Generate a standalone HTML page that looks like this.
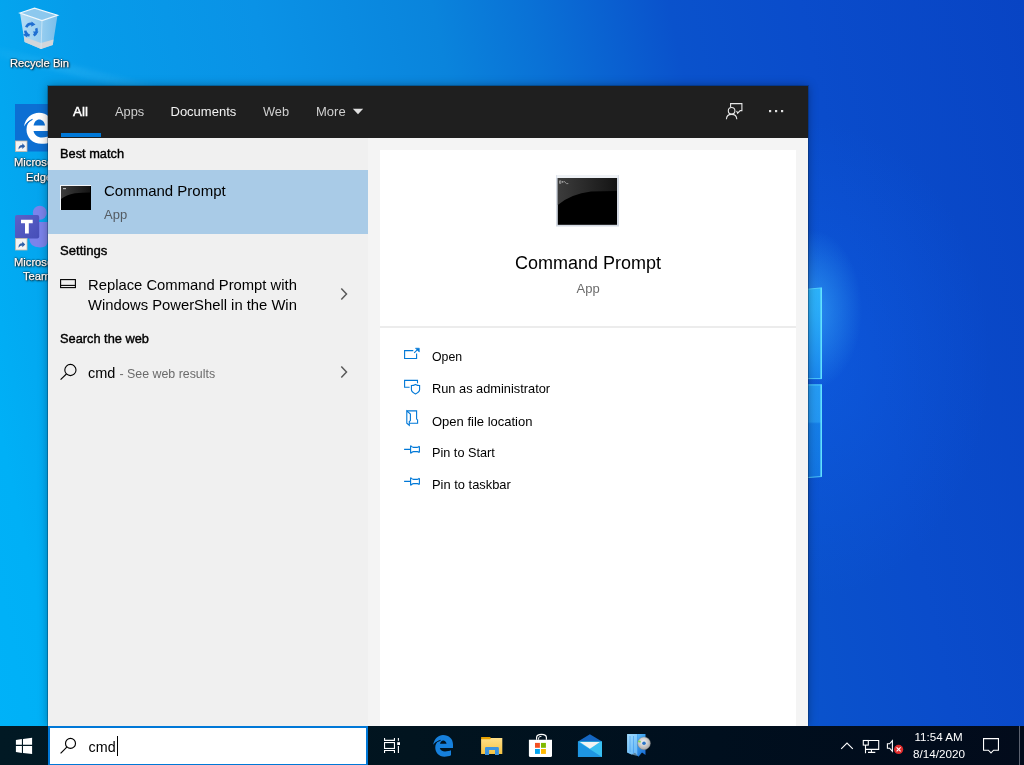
<!DOCTYPE html>
<html><head><meta charset="utf-8">
<style>
*{margin:0;padding:0;box-sizing:border-box}
html,body{width:1024px;height:765px;overflow:hidden}
body{position:relative;font-family:"Liberation Sans",sans-serif;
background:linear-gradient(78deg,#00b2f8 0%,#00b0f6 6%,#04a4ee 14%,#069cea 20%,#0a92e6 35%,#0a84dc 50%,#0a72d6 58%,#0a52cc 70%,#0a4ccb 81%,#0844c4 100%);}
.a{position:absolute;white-space:nowrap;line-height:1}
#glow{position:absolute;left:600px;top:60px;width:424px;height:666px;background:radial-gradient(ellipse 50px 80px at 212px 250px,rgba(60,180,255,.6),rgba(60,180,255,0) 100%),radial-gradient(ellipse 180px 240px at 212px 300px,rgba(20,110,255,.3),rgba(20,110,255,0) 100%)}
#panel{will-change:transform;position:absolute;left:48px;top:86px;width:760px;height:640px;box-shadow:0 0 0 1px rgba(0,30,60,.3),0 0 9px rgba(0,0,0,.35)}
#hdr{position:absolute;left:0;top:0;width:760px;height:52px;background:#1f1f1f}
#lp{position:absolute;left:0;top:52px;width:320px;height:588px;background:#f0f0f0}
#rp{position:absolute;left:320px;top:52px;width:440px;height:588px;background:#f4f4f4}
#card{position:absolute;left:12px;top:12px;width:416px;height:576px;background:#fff}
#taskbar{will-change:transform;position:absolute;left:0;top:726px;width:1024px;height:39px;background:linear-gradient(90deg,#011924 0%,#01141f 40%,#000f1e 70%,#020b1b 100%)}
.dt{will-change:transform;color:#fff;font-size:11.2px;-webkit-text-stroke:0.25px #fff;text-shadow:0 0 1px #000,0 0 2px #000,1px 1px 2px #000}
</style></head><body>
<div id="glow"></div>
<div style="position:absolute;left:-30px;top:41px;width:260px;height:9px;transform:rotate(13.5deg);transform-origin:0 50%;background:linear-gradient(90deg,rgba(140,225,255,0),rgba(140,225,255,.13) 35%,rgba(140,225,255,0) 90%);filter:blur(2px)"></div>

<!-- desktop icons -->
<svg id="desk" width="1024" height="726" style="position:absolute;left:0;top:0">
 <defs>
  <linearGradient id="binb" x1="0" y1="0" x2="1" y2="0"><stop offset="0" stop-color="#bfe0f5"/><stop offset="0.55" stop-color="#9fd0f0"/><stop offset="1" stop-color="#80c0ea"/></linearGradient>
  <linearGradient id="teamb" x1="0" y1="0" x2="1" y2="1"><stop offset="0" stop-color="#5b62c8"/><stop offset="1" stop-color="#464eb8"/></linearGradient>
 </defs>
 <!-- light beams -->
 <defs>
  <linearGradient id="pn1" x1="0" y1="0" x2="0" y2="1"><stop offset="0" stop-color="#30c0ff" stop-opacity=".8"/><stop offset="1" stop-color="#20a0f8" stop-opacity=".6"/></linearGradient>
  <linearGradient id="pn2" x1="0" y1="0" x2="0" y2="1"><stop offset="0" stop-color="#30b8ff" stop-opacity=".7"/><stop offset=".4" stop-color="#30b8ff" stop-opacity=".65"/><stop offset=".42" stop-color="#1c98f2" stop-opacity=".6"/><stop offset="1" stop-color="#1890f0" stop-opacity=".55"/></linearGradient>
 </defs>
 <path d="M800,289.8L822,287.8V379H800Z" fill="url(#pn1)"/>
 <path d="M800,384.5H822V476.5L800,478Z" fill="url(#pn2)"/>
 <path d="M821.2,288V379M821.2,384.5V476.5" stroke="#66e6ff" stroke-width="1.5"/>
 <path d="M808,289.2L822,287.8M808,378.6H822M808,384.9H822M808,477.5L822,476.5" stroke="#58d8ff" stroke-width="1" opacity=".85"/>
 <!-- recycle bin -->
 <g>
  <path d="M20,13L24.6,42L41,49L52.8,45L57.5,15.3L42,20.5Z" fill="url(#binb)" opacity="0.95"/>
  <path d="M24,37L41,43L53.5,39.5L52.8,45L41,49L24.6,42Z" fill="#d2d6da"/>
  <path d="M20,13L34.5,8.2L57.5,15.3L42,20.5Z" fill="#8cc8ee" stroke="#f2f8fc" stroke-width="1.2"/>
  <path d="M42,20.5L41,49" stroke="#cfe8f8" stroke-width="0.8"/>
  <g fill="none" stroke="#1f6fd2" stroke-width="2.6">
   <path d="M26.2,27.2A5.6,5.6 0 0 1 32.5,23.9"/>
   <path d="M36.2,28.3A5.6,5.6 0 0 1 33.6,35.3"/>
   <path d="M29.6,35.6A5.6,5.6 0 0 1 25.3,30.6"/>
  </g>
  <g fill="#1f6fd2">
   <path d="M31.5,21.5L35.5,24.6L31.2,26.8Z"/>
   <path d="M38.5,31.5L35.6,35.8L32.9,31.6Z"/>
   <path d="M27.2,37.5L23,34.8L27.6,32.2Z"/>
  </g>
 </g>
 <!-- edge desktop icon -->
 <rect x="15" y="104" width="34" height="47.5" fill="#0c6fd3"/>
 <path d="M24,126.5C25.5,117.5 32,112.7 39,112.7C47,112.7 53,118.5 53,127V131H33.5C34.5,135 37.5,137.5 42,137.5C45.5,137.5 49,136.5 51.5,135V142C48.5,143.3 45,143.8 41.5,143.8C32.5,143.8 26.5,137.5 26.5,129.5C26.5,125 28.5,121.5 31.5,119.5C28.5,120.8 25.8,123.2 24,126.5Z" fill="#fff"/>
 <path d="M33.6,125.5H45C44.6,121.8 42,119.5 39.2,119.5C36.5,119.5 34.2,121.8 33.6,125.5Z" fill="#0c6fd3"/>
 <path d="M26.3,124.5Q29,120.8 32.5,119.2" stroke="#0c6fd3" stroke-width="1.1" fill="none"/>
 <rect x="15.5" y="141" width="11.5" height="10.5" fill="#f3f3f3" stroke="#c8b9a8" stroke-width="0.8"/>
 <path d="M18.5,149.5Q18.3,145.2 22.3,145L22.3,143.3L25.2,146.2L22.3,149V147.3Q20,147.3 18.5,149.5Z" fill="#2d5fa8"/>
 <!-- teams desktop icon -->
 <circle cx="39.8" cy="212.7" r="7" fill="#7b83eb"/>
 <path d="M29.2,222H48V240Q48,247.4 40,247.4Q29.2,247.4 29.2,238Z" fill="#7b83eb"/>
 <rect x="15" y="215" width="24.2" height="23.6" rx="2" fill="url(#teamb)"/>
 <path d="M21,219.8H32.7V223.3H28.8V233.5H25V223.3H21Z" fill="#fff"/>
 <rect x="15.5" y="238.5" width="11.5" height="11.5" fill="#f3f3f3" stroke="#c8b9a8" stroke-width="0.8"/>
 <path d="M18.5,247.8Q18.3,243.5 22.3,243.3L22.3,241.6L25.2,244.5L22.3,247.3V245.6Q20,245.6 18.5,247.8Z" fill="#2d5fa8"/>
</svg>
<div class="a dt" style="left:14px;top:157.3px">Microsoft</div>
<div class="a dt" style="left:26px;top:171.5px">Edge</div>
<div class="a dt" style="left:14px;top:256.8px">Microsoft</div>
<div class="a dt" style="left:23.3px;top:271px">Teams</div>

<div class="a dt" style="left:10px;top:58px">Recycle Bin</div>

<div id="panel">
  <div id="hdr">
    <div class="a" style="left:25px;top:18.6px;font-size:13.4px;-webkit-text-stroke:0.45px #fff;color:#fff">All</div>
    <div style="position:absolute;left:13px;top:47px;width:40px;height:4px;background:#0078d7"></div>
    <div class="a" style="left:67px;top:19.6px;font-size:12.8px;color:#cfcfcf">Apps</div>
    <div class="a" style="left:122.5px;top:19px;font-size:13px;color:#f2f2f2">Documents</div>
    <div class="a" style="left:215px;top:19.6px;font-size:12.8px;color:#cfcfcf">Web</div>
    <div class="a" style="left:268px;top:19px;font-size:13px;color:#cfcfcf">More</div>
  </div>
  <div id="lp">
    <div class="a" style="left:12px;top:10.3px;font-size:12.8px;-webkit-text-stroke:0.4px #000;color:#000">Best match</div>
    <div style="position:absolute;left:0;top:32px;width:320px;height:64px;background:#a9cbe7"></div>
    <div class="a" style="left:56px;top:45.3px;font-size:15px;color:#000">Command Prompt</div>
    <div class="a" style="left:56px;top:69.5px;font-size:13px;color:#545b62">App</div>
    <div class="a" style="left:12px;top:106px;font-size:13.1px;-webkit-text-stroke:0.4px #000;color:#000">Settings</div>
    <div class="a" style="left:40px;top:139.6px;font-size:14.8px;color:#000">Replace Command Prompt with</div>
    <div class="a" style="left:40px;top:160px;font-size:14.8px;color:#000">Windows PowerShell in the Win</div>
    <div class="a" style="left:12px;top:194.7px;font-size:12.8px;-webkit-text-stroke:0.4px #000;color:#000">Search the web</div>
    <div class="a" style="left:40px;top:227.7px;font-size:14.5px;color:#000">cmd <span style="font-size:12.4px;color:#6b6b6b">- See web results</span></div>
  </div>
  <div id="rp">
    <div id="card">
      <div class="a" style="left:135px;top:103.5px;font-size:18px;color:#000">Command Prompt</div>
      <div class="a" style="left:196.5px;top:132.4px;font-size:13px;color:#6b6b6b">App</div>
      <div style="position:absolute;left:0;top:176px;width:416px;height:2px;background:#ececec"></div>
      <div class="a" style="left:52px;top:200.8px;font-size:12.3px;color:#000">Open</div>
      <div class="a" style="left:52px;top:232.8px;font-size:12.8px;color:#000">Run as administrator</div>
      <div class="a" style="left:52px;top:264.8px;font-size:13px;color:#000">Open file location</div>
      <div class="a" style="left:52px;top:296.8px;font-size:12.7px;color:#000">Pin to Start</div>
      <div class="a" style="left:52px;top:328.8px;font-size:12.9px;color:#000">Pin to taskbar</div>
    </div>
  </div>
</div>

<div id="taskbar">
  <div style="position:absolute;left:48px;top:0;width:320px;height:39px;background:#fff;border:2px solid #0078d7;border-bottom-width:1px"></div>
  <div class="a" style="left:88.6px;top:13.7px;font-size:14.3px;color:#000">cmd</div>
  <div style="position:absolute;left:117px;top:10px;width:1px;height:20px;background:#000"></div>

<svg id="tbi" width="1024" height="39" style="position:absolute;left:0;top:0">
 <defs>
  <linearGradient id="fold" x1="0" y1="0" x2="0" y2="1"><stop offset="0" stop-color="#ffe08a"/><stop offset="1" stop-color="#f6c342"/></linearGradient>
  <linearGradient id="setupg" x1="0" y1="0" x2="1" y2="1"><stop offset="0" stop-color="#9fdcff"/><stop offset="0.5" stop-color="#3aa0ee"/><stop offset="1" stop-color="#1565d0"/></linearGradient>
  <radialGradient id="cd" cx="0.45" cy="0.4" r="0.6"><stop offset="0" stop-color="#f4f4f4"/><stop offset="0.6" stop-color="#c9c9c9"/><stop offset="1" stop-color="#a8a8a8"/></radialGradient>
 </defs>
 <g transform="translate(0,-726)">
 <!-- windows logo -->
 <g fill="#fff">
  <path d="M15.9,739.9L21.9,739.1V744.8H15.9Z"/>
  <path d="M23,739L32.1,737.8V744.8H23Z"/>
  <path d="M15.9,746.1H21.9V753L15.9,752Z"/>
  <path d="M23,746.1H32.1V754L23,753Z"/>
 </g>
 <!-- search icon -->
 <g fill="none" stroke="#000" stroke-width="1.15">
  <circle cx="70.5" cy="743.4" r="5"/>
  <path d="M66.8,747.1L60.6,753.3"/>
 </g>
 <!-- task view -->
 <g fill="none" stroke="#fff" stroke-width="1.1">
  <path d="M384.55,738V740.35H394.45V738"/>
  <rect x="384.55" y="742.55" width="9.9" height="5.9"/>
  <path d="M384.55,753V750.55H394.45V753"/>
  <path d="M398.4,738V740.8M398.4,746.1V753"/>
 </g>
 <rect x="397.2" y="742.2" width="2.8" height="2.8" fill="#fff"/>
 <!-- edge -->
 <g transform="translate(428,730)">
  <path d="M5.1,14.7C6.5,8.5 10.5,5.1 15,5.1C21,5.1 25,9 25,14.5V18H11.8C12.3,20.3 14.3,21.5 17,21.5C19.3,21.5 21.5,21 23,20.3V25.3C21,26.3 18.8,26.7 16.5,26.7C10.8,26.7 7.25,22.5 7.25,17.5C7.25,14.5 8.5,12.5 10.5,11C8.5,11.8 6.5,13 5.1,14.7Z" fill="#1680dc"/>
  <path d="M12,13.7H18.5C18.3,11.8 16.9,10.4 15.2,10.4C13.7,10.4 12.3,11.9 12,13.7Z" fill="#01131f"/>
  <path d="M6.8,13.6Q9.5,10.9 12.6,10.3" stroke="#01131f" stroke-width="1" fill="none"/>
 </g>
 <!-- folder -->
 <path d="M481.1,737.1H490L491.2,738.2V740H481.1Z" fill="#e8a200"/>
 <path d="M481.1,739.3H490L491.2,738H502.3V753.9H481.1Z" fill="url(#fold)"/>
 <path d="M485,754.9V748.2Q485,746.9 486.3,746.9H497.6Q498.9,746.9 498.9,748.2V754.9H495V750H489.1V754.9Z" fill="#3c94e0"/>
 <!-- store -->
 <path d="M528.9,739.8H552V755.5Q552,757 550.5,757H530.4Q528.9,757 528.9,755.5Z" fill="#fff"/>
 <path d="M536.6,739.8V737.5Q536.6,734.4 541.5,734.4Q546.4,734.4 546.4,737.5V739.8" fill="none" stroke="#fff" stroke-width="1.2"/>
 <path d="M538.6,739.8V738Q538.6,736.3 541.5,736.3" fill="none" stroke="#fff" stroke-width="0.9"/>
 <rect x="535" y="742.9" width="4.9" height="4.9" fill="#f25022"/>
 <rect x="541" y="742.9" width="4.9" height="4.9" fill="#7fba00"/>
 <rect x="535" y="749" width="4.9" height="4.9" fill="#00a4ef"/>
 <rect x="541" y="749" width="4.9" height="4.9" fill="#ffb900"/>
 <!-- mail -->
 <path d="M577.9,741.4L589.9,734.3L602,741.4Z" fill="#1466c2"/>
 <rect x="577.9" y="741.4" width="24.1" height="15.6" fill="#1e95e2"/>
 <path d="M577.9,741.4H602V757Z" fill="#3ac0f2"/>
 <path d="M579.9,742H599.9L589.9,748.8Z" fill="#f3f3f3"/>
 <!-- setup -->
 <path d="M627.1,734H645.5V755L642,752.5L638.5,756.7L635,752.8L631.5,754.5L627.1,752.5Z" fill="url(#setupg)"/>
 <path d="M627.1,734.5L637.5,734V756L631.5,754.5L627.1,752.5Z" fill="#a6dcff" opacity=".55"/>
 <path d="M630,736V752M633.5,736V753M637.5,734V756" stroke="#2f8be8" stroke-width="0.8" opacity=".6"/>
 <circle cx="644" cy="743.3" r="6.4" fill="url(#cd)" stroke="#7a7a7a" stroke-width="0.4"/>
 <circle cx="644" cy="743.3" r="1.8" fill="#2a74c8"/>
 <path d="M638.3,741L640.6,742" stroke="#7ee04a" stroke-width="1.4"/>
 <!-- tray -->
 <g fill="none" stroke="#fff" stroke-width="1.1">
  <path d="M841.2,748.8L847,743L852.8,748.8"/>
  <path d="M868.3,740.5H878.7V749.4H866"/>
  <rect x="863.3" y="740.5" width="5" height="4.6"/>
  <path d="M865.5,745.1V753.2M868,752.4H875.3M871.4,749.4V752.4"/>
  <path d="M887.4,743.8H889.6L892.4,740.6V751.4L889.6,748.2H887.4Z"/>
 </g>
 <circle cx="898.6" cy="749.4" r="4.6" fill="#e02b2b"/>
 <path d="M896.6,747.4L900.6,751.4M900.6,747.4L896.6,751.4" stroke="#fff" stroke-width="1.1"/>
 <path d="M983.55,738.6H998.45V750.2H993.6L991,752.9L988.4,750.2H983.55Z" fill="none" stroke="#fff" stroke-width="1.1"/>
 <rect x="1019" y="726" width="1" height="39" fill="#5c6270"/>
 </g>
</svg>
  <div class="a" style="left:914.5px;top:5.1px;font-size:11.6px;color:#fff">11:54 AM</div>
  <div class="a" style="left:913px;top:22.3px;font-size:11.7px;color:#fff">8/14/2020</div>
</div>

<svg id="ov" width="1024" height="765" style="position:absolute;left:0;top:0">
 <defs>
  <linearGradient id="gl" x1="0" y1="0" x2="1" y2="0"><stop offset="0" stop-color="#3c3c3c"/><stop offset="1" stop-color="#141414"/></linearGradient>
 </defs>
 <!-- small cmd icon -->
 <g transform="translate(60,185)">
  <rect x="0" y="0" width="31" height="25" fill="#f4f7fb"/>
  <rect x="1" y="1" width="30" height="24" fill="#000"/>
  <path d="M1,1H30V7.4Q22,7.4 15,8.2Q6,10 1,14Z" fill="url(#gl)"/>
  <rect x="3" y="3" width="3" height="1.2" fill="#bbb"/>
 </g>
 <!-- big cmd icon -->
 <g transform="translate(556,175)">
  <rect x="0" y="0" width="63" height="51.5" fill="#d3d9e2"/>
  <rect x="0.5" y="0" width="62" height="3" fill="#eef1f5"/>
  <rect x="1.8" y="3" width="59.2" height="46.8" fill="#000"/>
  <path d="M1.8,3H61V16Q46,16 35,16.6Q15,19 1.8,30Z" fill="url(#gl)"/>
  <path d="M3.5,5.8h1.3v2.6h-1.3zM6,6.5h1.2v0.8H6zM8,6.2l2.5,2.4h1.8" stroke="#aaa" stroke-width="0.8" fill="none"/>
 </g>
 <!-- settings icon -->
 <g fill="none" stroke="#000" stroke-width="1.1">
  <rect x="60.6" y="279.6" width="14.8" height="8"/>
  <path d="M60.6,285.4H75.4"/>
 </g>
 <!-- chevrons -->
 <path d="M341.3,288.6L346.5,294L341.3,299.4" fill="none" stroke="#5a5a5a" stroke-width="1.5"/>
 <path d="M341.3,366.6L346.5,372L341.3,377.4" fill="none" stroke="#5a5a5a" stroke-width="1.5"/>
 <!-- search icon list -->
 <g fill="none" stroke="#000" stroke-width="1.1">
  <circle cx="70.4" cy="370" r="5.6"/>
  <path d="M66.4,374L60.6,379.6"/>
 </g>
 <!-- action icons -->
 <g fill="none" stroke="#0078d7" stroke-width="1.1">
  <path d="M413.3,350.6H404.6V358.5H416.6V353.5"/>
  <path d="M414.2,352.9L418.2,348.9"/>
  <path d="M415.4,348.2H419.3V352.1Z" fill="#0078d7" stroke-width="0.6"/>
  <path d="M409.6,387.3H404.6V380.4H417.5V383.2"/>
  <path d="M415.5,384.4Q413.5,385.5 411.4,385.5V389.6Q411.4,392.2 415.5,394Q419.6,392.2 419.6,389.6V385.5Q417.5,385.5 415.5,384.4Z"/>
  <path d="M406.8,410.9H416.6V419.1L417.6,419.9V423.3H409.6"/>
  <path d="M406.8,410.9L410.4,414.1V420.6L409.3,421.5V425.3L406.8,423.3Z"/>
  <path d="M404.1,449.4H410.6M410.6,445.5V453.5M419.4,446.2V452.6M410.6,445.5Q412,447.4 413.5,447.4H417.2Q418.4,447.4 419.4,446.2M410.6,453.5Q412,451.6 413.5,451.6H417.2Q418.4,451.6 419.4,452.6"/>
  <path d="M404.1,481.4H410.6M410.6,477.5V485.5M419.4,478.2V484.6M410.6,477.5Q412,479.4 413.5,479.4H417.2Q418.4,479.4 419.4,478.2M410.6,485.5Q412,483.6 413.5,483.6H417.2Q418.4,483.6 419.4,484.6"/>
 </g>
 <!-- header feedback icon -->
 <g fill="none" stroke="#e6e6e6" stroke-width="1.1">
  <path d="M730.6,107.2V103.6H741.9V110.6H740.2L737.6,113.2L736.6,110.9"/>
  <circle cx="731.6" cy="110.8" r="3.3"/>
  <path d="M726.4,119.2Q726.6,114.4 731.6,114.4Q736.6,114.4 736.8,119.2"/>
 </g>
 <g fill="#e0e0e0">
  <rect x="769" y="110" width="2.2" height="2.2"/><rect x="775" y="110" width="2.2" height="2.2"/><rect x="781" y="110" width="2.2" height="2.2"/>
  <path d="M352.8,108.8H363.2L358,114.2Z"/>
 </g>
</svg>
</body></html>
